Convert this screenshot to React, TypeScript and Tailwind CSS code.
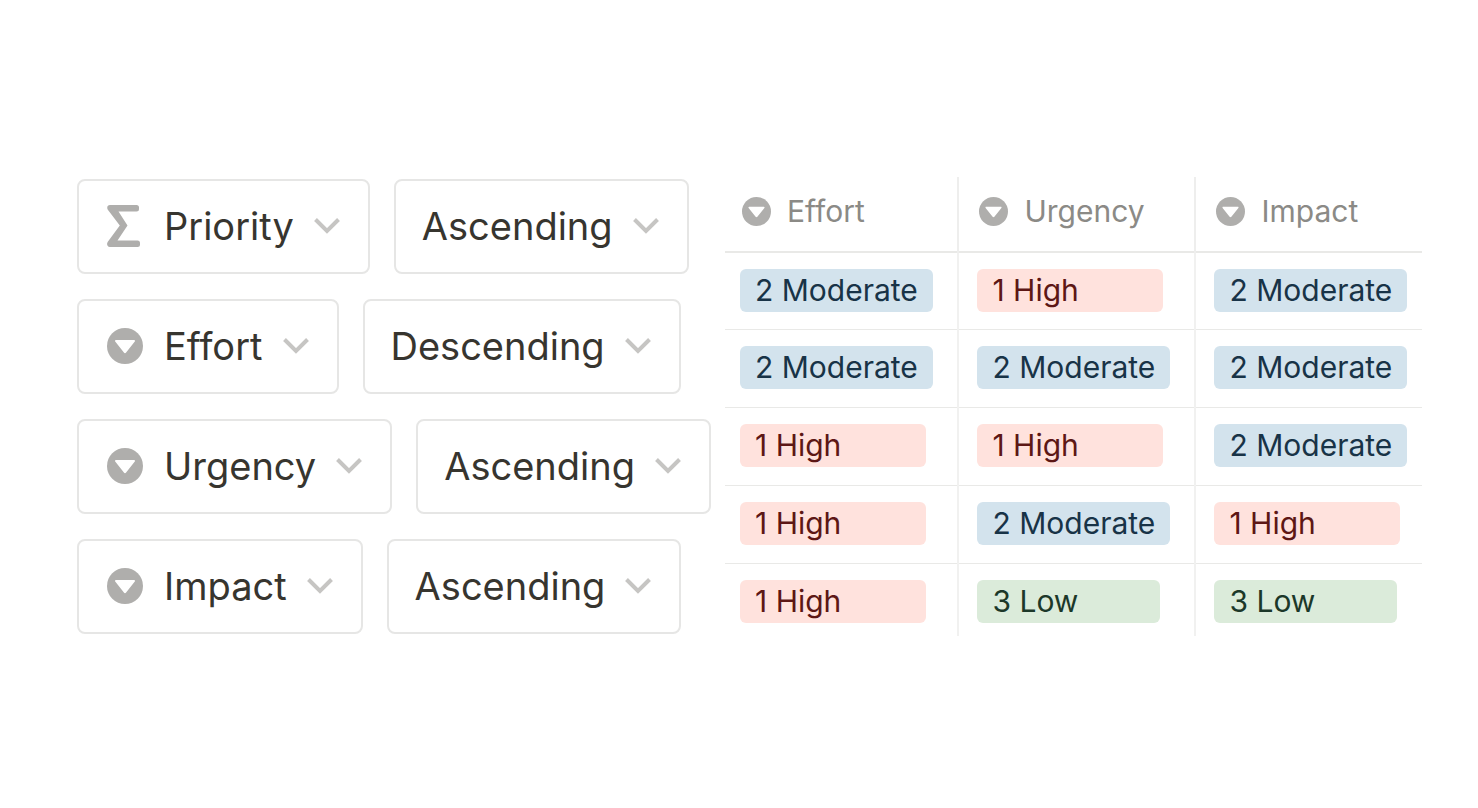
import { useState } from 'react';

const propertyOptions = ['Priority', 'Effort', 'Urgency', 'Impact'];
const orderOptions = ['Ascending', 'Descending'];

const initialSorts = [
  { property: 'Priority', order: 'Ascending' },
  { property: 'Effort', order: 'Descending' },
  { property: 'Urgency', order: 'Ascending' },
  { property: 'Impact', order: 'Ascending' },
];

const columns = ['Effort', 'Urgency', 'Impact'];

const rows = [
  ['2 Moderate', '1 High', '2 Moderate'],
  ['2 Moderate', '2 Moderate', '2 Moderate'],
  ['1 High', '1 High', '2 Moderate'],
  ['1 High', '2 Moderate', '1 High'],
  ['1 High', '3 Low', '3 Low'],
];

const tagStyles: Record<string, string> = {
  '1 High': 'w-[186px] bg-[#ffe2dd] text-[#5d1715]',
  '2 Moderate': 'w-[193px] bg-[#d3e3ed] text-[#183347]',
  '3 Low': 'w-[183px] bg-[#dbebda] text-[#1c3829]',
};

function SelectIcon({ className }: { className: string }) {
  return (
    <svg viewBox="0 0 36 36" className={className} aria-hidden="true">
      <circle cx="18" cy="18" r="18" fill="#afaeac" />
      <path d="M9 12h18c1 0 1.300.8.8 1.500l-8.700 11.100c-.6.8-1.600.8-2.200 0L8.200 13.500c-.5-.7-.2-1.500.8-1.500z" fill="#fff" />
    </svg>
  );
}

function FormulaIcon({ className }: { className: string }) {
  return (
    <svg viewBox="0 0 36 42" className={className} aria-hidden="true">
      <path
        d="M3 0h26.500a2.500 2.500 0 0 1 2.500 2.500v1.500a2.500 2.500 0 0 1-2.500 2.500H11.500L20.500 20.500 10.500 35.500H30.500a2.500 2.500 0 0 1 2.500 2.500v1.500a2.500 2.500 0 0 1-2.500 2.500H2.800C.2 42-.7 39 .8 36.800L12.800 20.500 1 5C-.6 2.600.4 0 3 0z"
        fill="#afaeac"
      />
    </svg>
  );
}

function ChevronIcon({ className }: { className: string }) {
  return (
    <svg viewBox="0 0 26 16" className={className} aria-hidden="true">
      <path d="M1.500 1.500 13 13 24.500 1.500" fill="none" stroke="#c6c5c3" strokeWidth="4" />
    </svg>
  );
}

type DropdownProps = {
  label: string;
  value: string;
  options: string[];
  withIcon?: boolean;
  onChange: (value: string) => void;
};

function Dropdown({ label, value, options, withIcon, onChange }: DropdownProps) {
  return (
    <div className="grid items-center rounded-lg border-2 border-[#e6e6e5] bg-white text-[#37352f]">
      <select
        aria-label={label}
        value={value}
        onChange={(e) => onChange(e.target.value)}
        className={`col-start-1 row-start-1 h-[91px] cursor-pointer appearance-none rounded-lg bg-transparent pr-[74px] text-[38px] field-sizing-content ${
          withIcon ? 'pl-[85px]' : 'pl-[26px]'
        }`}
      >
        {options.map((option) => (
          <option key={option}>{option}</option>
        ))}
      </select>
      {withIcon && (
        <span className="pointer-events-none col-start-1 row-start-1 ml-7 justify-self-start">
          {value === 'Priority' ? <FormulaIcon className="h-[42px] w-9" /> : <SelectIcon className="size-9" />}
        </span>
      )}
      <ChevronIcon className="pointer-events-none col-start-1 row-start-1 mr-7 h-4 w-[26px] justify-self-end" />
    </div>
  );
}

export default function App() {
  const [sorts, setSorts] = useState(initialSorts);

  const updateSort = (index: number, change: Partial<(typeof initialSorts)[0]>) => {
    setSorts(sorts.map((sort, i) => (i === index ? { ...sort, ...change } : sort)));
  };

  return (
    <main className="flex min-h-screen items-center bg-white pt-1 pr-14 pl-[77px] font-['Inter','Liberation_Sans',sans-serif]">
      <section className="flex w-[648px] shrink-0 flex-col gap-[25px]" aria-label="Sorts">
        {sorts.map((sort, index) => (
          <div key={index} className="flex gap-6">
            <Dropdown
              label="Sort property"
              value={sort.property}
              options={propertyOptions}
              withIcon
              onChange={(property) => updateSort(index, { property })}
            />
            <Dropdown
              label="Sort order"
              value={sort.order}
              options={orderOptions}
              onChange={(order) => updateSort(index, { order })}
            />
          </div>
        ))}
      </section>

      <table className="w-full table-fixed border-collapse text-left">
        <colgroup>
          <col className="w-[33.5%]" />
          <col className="w-[34%]" />
          <col />
        </colgroup>
        <thead>
          <tr className="h-[75px] border-b-2 border-[#e9e9e7]">
            {columns.map((column) => (
              <th
                key={column}
                className="border-r-2 border-[#eeeeed] p-0 pb-1 pl-5 text-[30px] font-normal text-[#8b8a86] first:pl-[17px] last:border-r-0"
              >
                <span className="flex items-center gap-4">
                  <SelectIcon className="size-[29px]" />
                  {column}
                </span>
              </th>
            ))}
          </tr>
        </thead>
        <tbody>
          {rows.map((row, index) => (
            <tr key={index} className="h-[78px] border-b border-[#e9e9e7] last:h-[72px] last:border-b-0">
              {row.map((value, i) => (
                <td key={i} className="border-r-2 border-[#f1f1f0] p-0 pt-4 pl-[18px] align-top first:pl-[15px] last:border-r-0">
                  <span className={`flex h-[43px] items-center rounded-md pl-[15px] text-[30px] ${tagStyles[value]}`}>
                    {value}
                  </span>
                </td>
              ))}
            </tr>
          ))}
        </tbody>
      </table>
    </main>
  );
}
